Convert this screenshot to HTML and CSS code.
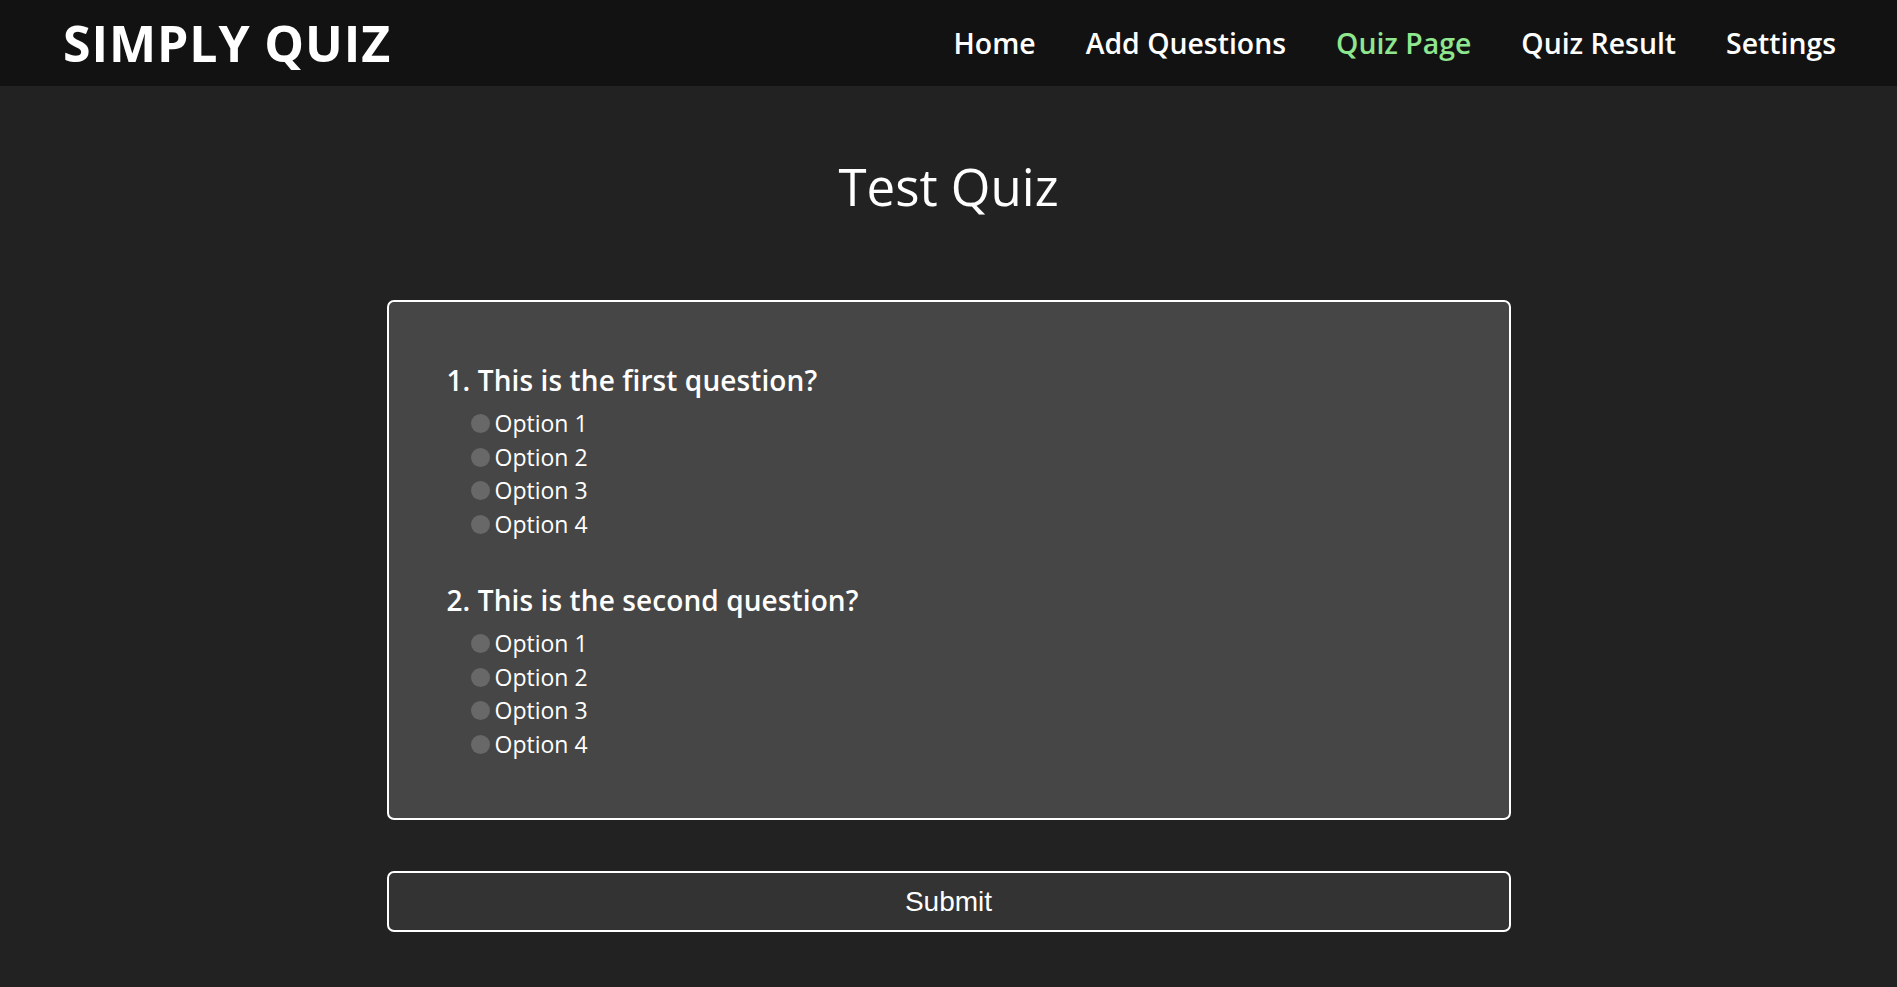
FILE: index.html
```html
<!DOCTYPE html>
<html lang="en">
<head>
<meta charset="utf-8">
<title>Simply Quiz</title>
<link rel="stylesheet" href="styles.css">
</head>
<body>
<header class="topbar">
  <div class="logo">SIMPLY QUIZ</div>
  <nav class="nav">
    <a class="nav-link" href="#">Home</a>
    <a class="nav-link" href="#">Add Questions</a>
    <a class="nav-link active" href="#">Quiz Page</a>
    <a class="nav-link" href="#">Quiz Result</a>
    <a class="nav-link" href="#">Settings</a>
  </nav>
</header>
<main class="main">
  <h1 class="title">Test Quiz</h1>
  <form class="quiz">
    <div class="card">
      <div class="question">
        <div class="q-text">1. This is the first question?</div>
        <label class="option"><input type="radio" name="q1"><span>Option 1</span></label>
        <label class="option"><input type="radio" name="q1"><span>Option 2</span></label>
        <label class="option"><input type="radio" name="q1"><span>Option 3</span></label>
        <label class="option"><input type="radio" name="q1"><span>Option 4</span></label>
      </div>
      <div class="question">
        <div class="q-text">2. This is the second question?</div>
        <label class="option"><input type="radio" name="q2"><span>Option 1</span></label>
        <label class="option"><input type="radio" name="q2"><span>Option 2</span></label>
        <label class="option"><input type="radio" name="q2"><span>Option 3</span></label>
        <label class="option"><input type="radio" name="q2"><span>Option 4</span></label>
      </div>
    </div>
    <button type="button" class="submit">Submit</button>
  </form>
</main>
</body>
</html>
```
FILE: styles.css
```css
* { box-sizing: border-box; }
html, body {
  margin: 0;
  padding: 0;
  background: #222222;
  color: #ffffff;
  font-family: "Open Sans", "Noto Sans", sans-serif;
}
.topbar {
  height: 86px;
  background: #121212;
  display: flex;
  align-items: center;
  justify-content: space-between;
  padding: 0 61px 0 63px;
}
.logo {
  font-size: 50px;
  font-weight: 700;
  line-height: 1;
  letter-spacing: 0.9px;
}
.nav {
  display: flex;
  gap: 50px;
  align-items: center;
}
.nav-link {
  color: #ffffff;
  text-decoration: none;
  font-size: 28.4px;
  font-weight: 600;
  line-height: 1;
}
.nav-link.active { color: #8ee68e; }
.main {
  display: flex;
  flex-direction: column;
  align-items: center;
}
.title {
  margin: 70px 0 84px;
  font-size: 51px;
  font-weight: 400;
  line-height: 60px;
}
.quiz {
  width: 1124px;
  display: flex;
  flex-direction: column;
  gap: 51px;
}
.card {
  background: #464646;
  border: 2px solid #ffffff;
  border-radius: 7px;
  padding: 60px 58px 57px;
  display: flex;
  flex-direction: column;
  gap: 41px;
}
.question {
  display: flex;
  flex-direction: column;
}
.q-text {
  font-size: 28px;
  font-weight: 600;
  line-height: 36px;
  margin-bottom: 9px;
  letter-spacing: 0.1px;
}
.option {
  display: flex;
  align-items: center;
  margin-left: 24px;
  font-size: 23px;
  line-height: 33.5px;
}
.option input {
  appearance: none;
  -webkit-appearance: none;
  width: 19px;
  height: 19px;
  margin: 0 5px 0 0;
  border-radius: 50%;
  background: #686868;
  border: none;
}
.submit {
  height: 61px;
  background: #333333;
  color: #ffffff;
  border: 2px solid #ffffff;
  border-radius: 7px;
  font-family: "Liberation Sans", Arial, sans-serif;
  font-size: 28px;
}
```
